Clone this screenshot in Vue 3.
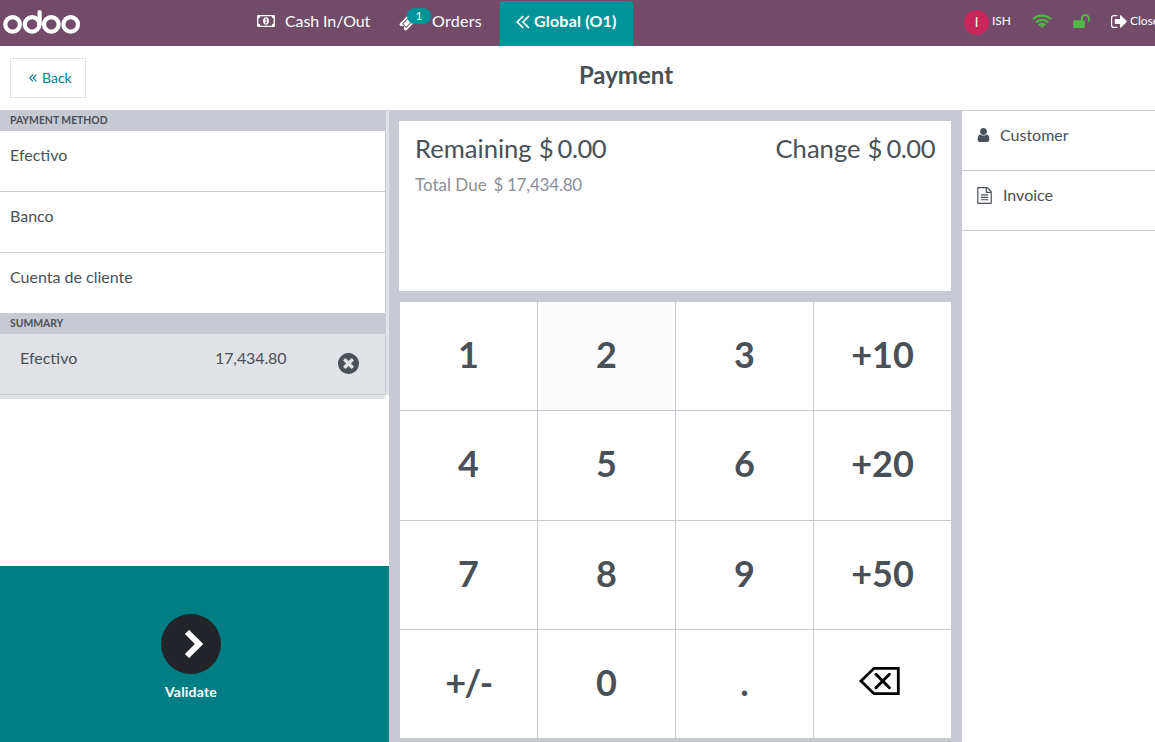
<script setup>
import { ref } from 'vue';

const methods = ref(['Efectivo', 'Banco', 'Cuenta de cliente']);
const lines = ref([{ name: 'Efectivo', amount: '17,434.80' }]);
const keys = ['1', '2', '3', '+10', '4', '5', '6', '+20', '7', '8', '9', '+50', '+/-', '0', '.', 'back'];
const activeKey = ref('2');

function removeLine(index){
    lines.value.splice(index, 1);
}
</script>

<template>
    <div class="pos">
        <header class="topbar">
            <svg class="logo" viewBox="0 0 78 26">
                <g fill="none" stroke="#fff" stroke-width="4.2">
                    <circle cx="9.6" cy="15.4" r="7.3" />
                    <circle cx="29.1" cy="15.4" r="7.3" />
                    <circle cx="48.3" cy="15.4" r="7.3" />
                    <circle cx="67.7" cy="15.4" r="7.3" />
                    <path d="M36.6 15.4V3.2" stroke-linecap="round" />
                </g>
            </svg>
            <div class="menu">
                <div class="menu-item cash">
                    <svg class="icon-money" viewBox="0 0 18 12">
                        <rect x="0.7" y="0.7" width="16.6" height="10.6" rx="0.6" fill="none" stroke="#fff" stroke-width="1.3" />
                        <path d="M1 1h2.400A2.400 2.400 0 0 1 1 3.400zM17 1h-2.400A2.400 2.400 0 0 0 17 3.400zM1 11h2.400A2.400 2.400 0 0 0 1 8.600zM17 11h-2.400A2.400 2.400 0 0 1 17 8.600z" fill="#fff" />
                        <ellipse cx="9" cy="6" rx="2.9" ry="3.7" fill="#fff" />
                        <path d="M8.1 4.6l1.1-.7v3.8M8 7.9h2.2" fill="none" stroke="#714b67" stroke-width="0.9" />
                    </svg>
                    <span>Cash In/Out</span>
                </div>
                <div class="menu-item orders">
                    <svg class="icon-ticket" viewBox="0 0 1792 1792">
                        <path fill="#fff" d="M1024 452l316 316-572 572-316-316zm-211 979l618-618q19-19 19-45t-19-45l-362-362q-18-18-45-18t-45 18l-618 618q-19 19-19 45t19 45l362 362q18 18 45 18t45-18zm889-637l-907 908q-37 37-90.500 37t-90.500-37l-126-126q56-56 56-136t-56-136-136-56-136 56l-125-126q-37-37-37-90.500t37-90.500l907-906q37-37 90.500-37t90.500 37l125 125q-56 56-56 136t56 136 136 56 136-56l126 125q37 37 37 90.500t-37 90.500z" />
                    </svg>
                    <span class="badge">1</span>
                    <span class="orders-label">Orders</span>
                </div>
                <div class="floor">
                    <svg class="icon-double" viewBox="0 0 14 14">
                        <path d="M7.200 1L1.200 7l6 6M13 1L7 7l6 6" fill="none" stroke="#fff" stroke-width="1.700" />
                    </svg>
                    <span>Global (O1)</span>
                </div>
            </div>
            <div class="status">
                <span class="avatar">I</span>
                <span class="user">ISH</span>
                <svg class="icon-wifi" viewBox="0 0 20 14">
                    <g fill="none" stroke="#4fb946" stroke-width="2.300">
                        <path d="M1 5.200a13 13 0 0 1 18 0" />
                        <path d="M4 8.300a8.700 8.700 0 0 1 12 0" />
                        <path d="M6.900 11.200a4.500 4.500 0 0 1 6.200 0" />
                    </g>
                    <path d="M10 14l-2-2.100a3 3 0 0 1 4 0z" fill="#4fb946" />
                </svg>
                <svg class="icon-lock" viewBox="64 128 1664 1408">
                    <path fill="#4fb946" d="M1728 576v256q0 26-19 45t-45 19h-64q-26 0-45-19t-19-45v-256q0-106-75-181t-181-75-181 75-75 181v192h96q40 0 68 28t28 68v576q0 40-28 68t-68 28h-960q-40 0-68-28t-28-68v-576q0-40 28-68t68-28h672v-192q0-185 131.500-316.500t316.500-131.500 316.500 131.500 131.500 316.500z" />
                </svg>
                <svg class="icon-out" viewBox="96 256 1536 1280">
                    <path fill="#fff" d="M704 1440q0 4 1 20t.5 26.500-3 23.500-10 19.500-20.500 6.500h-320q-119 0-203.500-84.500t-84.500-203.500v-704q0-119 84.500-203.500t203.500-84.500h320q13 0 22.500 9.500t9.500 22.500q0 4 1 20t.5 26.500-3 23.500-10 19.500-20.500 6.500h-320q-66 0-113 47t-47 113v704q0 66 47 113t113 47h312l11.500 1 11.500 3 8 5.500 7 9 2 13.500zm928-544q0 26-19 45l-544 544q-19 19-45 19t-45-19-19-45v-288h-448q-26 0-45-19t-19-45v-384q0-26 19-45t45-19h448v-288q0-26 19-45t45-19 45 19l544 544q19 19 19 45z" />
                </svg>
                <span class="close">Close</span>
            </div>
        </header>

        <div class="title-bar">
            <button class="back">
                <svg class="icon-back" viewBox="0 0 14 14">
                    <path d="M7 1L1.200 7 7 13M13 1L7.200 7l5.800 6" fill="none" stroke="#017e84" stroke-width="2" />
                </svg>
                <span>Back</span>
            </button>
            <h1>Payment</h1>
        </div>

        <main class="content">
            <section class="left">
                <div class="lists">
                    <div class="lists-inner">
                        <div class="section-title">PAYMENT METHOD</div>
                        <div v-for="m in methods" :key="m" class="method">{{ m }}</div>
                        <div class="section-title">SUMMARY</div>
                        <div v-for="(line, i) in lines" :key="i" class="line">
                            <span class="line-name">{{ line.name }}</span>
                            <span class="line-amount">{{ line.amount }}</span>
                            <svg class="icon-remove" viewBox="128 128 1536 1536" @click="removeLine(i)">
                                <path fill="#495057" d="M1277 1122q0-26-19-45l-181-181 181-181q19-19 19-45 0-27-19-46l-90-90q-19-19-46-19-26 0-45 19l-181 181-181-181q-19-19-45-19-27 0-46 19l-90 90q-19 19-19 46 0 26 19 45l181 181-181 181q-19 19-19 45 0 27 19 46l90 90q19 19 46 19 26 0 45-19l181-181 181 181q19 19 45 19 27 0 46-19l90-90q19-19 19-46zm387-226q0 209-103 385.500t-279.500 279.500-385.500 103-385.500-103-279.500-279.500-103-385.500 103-385.500 279.500-279.500 385.500-103 385.500 103 279.500 279.500 103 385.500z" />
                            </svg>
                        </div>
                    </div>
                </div>
                <div class="lists-foot"></div>
                <div class="validate">
                    <span class="validate-circle">
                        <svg class="icon-next" viewBox="0 0 20 30">
                            <path d="M3 3L15 15 3 27" fill="none" stroke="#fff" stroke-width="6" />
                        </svg>
                    </span>
                    <span class="validate-label">Validate</span>
                </div>
            </section>

            <section class="center">
                <div class="display">
                    <div class="amounts">
                        <div><span class="label">Remaining</span><span class="value">$ 0.00</span></div>
                        <div><span class="label">Change</span><span class="value">$ 0.00</span></div>
                    </div>
                    <div class="total"><span class="total-label">Total Due</span><span class="total-value">$ 17,434.80</span></div>
                </div>
                <div class="numpad">
                    <button
                        v-for="k in keys"
                        :key="k"
                        class="key"
                        :class="{ 'key--active': k === activeKey, 'key--sign': k === '+/-' }"
                    >
                        <svg v-if="k === 'back'" class="icon-backspace" viewBox="0 0 42 30">
                            <path d="M2 15L15 2.300h24.300v25.400H15z" fill="none" stroke="#000" stroke-width="2.800" />
                            <path d="M17 8.300l13.400 13.400M30.400 8.300L17 21.700" fill="none" stroke="#000" stroke-width="3" stroke-linecap="round" />
                        </svg>
                        <span v-else>{{ k }}</span>
                    </button>
                </div>
            </section>

            <section class="right">
                <div class="option">
                    <svg class="icon-user" viewBox="256 128 1280 1536">
                        <path fill="#495057" d="M1536 1399q0 109-62.500 187t-150.500 78h-854q-88 0-150.500-78t-62.500-187q0-85 8.500-160.500t31.500-152 58.500-131 94-89 134.500-34.500q131 128 313 128t313-128q76 0 134.500 34.500t94 89 58.500 131 31.500 152 8.500 160.500zm-256-887q0 159-112.500 271.500t-271.500 112.500-271.500-112.500-112.500-271.500 112.500-271.500 271.500-112.500 271.500 112.500 112.500 271.500z" />
                    </svg>
                    <span>Customer</span>
                </div>
                <div class="option">
                    <svg class="icon-file" viewBox="128 0 1536 1792">
                        <path fill="#495057" d="M1596 380q28 28 48 76t20 88v1152q0 40-28 68t-68 28h-1344q-40 0-68-28t-28-68v-1600q0-40 28-68t68-28h896q40 0 88 20t76 48zm-444-244v376h376q-10-29-22-41l-313-313q-12-12-41-22zm384 1528v-1024h-416q-40 0-68-28t-28-68v-416h-768v1536h1280zm-1024-864q0-14 9-23t23-9h704q14 0 23 9t9 23v64q0 14-9 23t-23 9h-704q-14 0-23-9t-9-23v-64zm736 224q14 0 23 9t9 23v64q0 14-9 23t-23 9h-704q-14 0-23-9t-9-23v-64q0-14 9-23t23-9h704zm0 256q14 0 23 9t9 23v64q0 14-9 23t-23 9h-704q-14 0-23-9t-9-23v-64q0-14 9-23t23-9h704z" />
                    </svg>
                    <span>Invoice</span>
                </div>
            </section>
        </main>
    </div>
</template>

<style>
body{
    margin: 0;
    overflow: hidden;
}
</style>

<style scoped>
.pos{
    display: flex;
    flex-direction: column;
    height: 100vh;
    overflow: hidden;
    background: #fff;
    color: #495057;
    font-family: Lato, sans-serif;
    font-size: 16px;
}

.pos *{
    box-sizing: border-box;
}

svg{
    display: block;
    flex: none;
}

button{
    font-family: inherit;
    color: inherit;
    padding: 0;
    margin: 0;
    border: none;
    background: #fff;
}

/* top bar */
.topbar{
    display: flex;
    flex: none;
    height: 46px;
    background: #714b67;
    color: #fff;
    white-space: nowrap;
    overflow: hidden;
}

.logo{
    width: 78px;
    height: 26px;
    margin: 9px 0 0 3px;
}

.menu{
    display: flex;
    flex: none;
    width: 552px;
    margin-left: 176px;
    line-height: 42px;
}

.menu-item{
    display: flex;
}

.cash{
    width: 142px;
    letter-spacing: -0.1px;
}

.icon-money{
    width: 18px;
    height: 12px;
    margin: 15px 10px 0 0;
}

.orders{
    position: relative;
    width: 101px;
}

.orders-label{
    letter-spacing: 0.3px;
}

.icon-ticket{
    width: 17px;
    height: 17px;
    margin: 14px 16px 0 0;
}

.badge{
    position: absolute;
    left: 8px;
    top: 8px;
    width: 24px;
    height: 16px;
    border-radius: 8px;
    background: #00939a;
    font-size: 12px;
    line-height: 15px;
    text-align: center;
}

.floor{
    display: flex;
    width: 133px;
    height: 45px;
    margin-top: 1px;
    padding-left: 16px;
    border-radius: 3px 3px 0 0;
    background: #00939a;
    font-weight: bold;
    letter-spacing: 0.2px;
    line-height: 40px;
}

.icon-double{
    width: 14px;
    height: 14px;
    margin: 14px 4px 0 0;
}

.status{
    display: flex;
    flex: none;
    margin-left: 155px;
    font-size: 12px;
    line-height: 42px;
}

.avatar{
    width: 25px;
    height: 25px;
    margin: 10px 3px 0 0;
    border-radius: 50%;
    background: #c9265c;
    font-size: 13px;
    line-height: 24px;
    text-align: center;
}

.user{
    width: 40px;
}

.icon-wifi{
    width: 20px;
    height: 14px;
    margin-top: 14px;
}

.icon-lock{
    width: 17px;
    height: 14px;
    margin: 14px 0 0 21px;
}

.icon-out{
    width: 16px;
    height: 13px;
    margin: 15px 3px 0 21px;
}

/* title */
.title-bar{
    display: flex;
    flex: none;
    height: 64px;
}

.back{
    display: flex;
    align-items: center;
    width: 76px;
    height: 40px;
    margin: 12px 0 0 10px;
    padding: 0 0 2px 18px;
    border: 1px solid #e0e2e6;
    color: #017e84;
    font-size: 14px;
}

.icon-back{
    width: 8px;
    height: 8px;
    margin: 2px 5px 0 0;
}

h1{
    width: 300px;
    margin: 0 0 0 390px;
    font-size: 24px;
    line-height: 58px;
    text-align: center;
}

/* columns */
.content{
    display: flex;
    flex: 1;
    min-height: 0;
}

.left{
    display: flex;
    flex-direction: column;
    width: 389px;
    border-top: 1px solid #c8cad3;
}

.lists{
    padding-right: 3px;
    background: #e1e2e5;
}

.lists-inner{
    border-right: 1px solid #c8cad3;
    background: #fff;
}

.section-title{
    height: 20px;
    padding-left: 10px;
    background: #c8cad3;
    font-size: 10.4px;
    font-weight: bold;
    line-height: 19px;
}

.method{
    height: 61px;
    padding-left: 10px;
    border-bottom: 1px solid #c8cad3;
    line-height: 48px;
}

.line{
    display: flex;
    height: 61px;
    padding-left: 20px;
    border-bottom: 1px solid #c8cad3;
    background: #e1e2e5;
    line-height: 48px;
}

.line-name{
    width: 195px;
}

.line-amount{
    width: 123px;
    letter-spacing: -0.1px;
}

.icon-remove{
    width: 21px;
    height: 21px;
    margin-top: 19px;
}

.lists-foot{
    width: 385px;
    height: 4px;
    background: #e1e2e5;
}

.validate{
    display: flex;
    flex-direction: column;
    align-items: center;
    height: 176px;
    margin-top: auto;
    padding: 48px 7px 0 0;
    background: #017e84;
    color: #fff;
}

.validate-circle{
    display: flex;
    align-items: center;
    justify-content: center;
    width: 60px;
    height: 60px;
    border-radius: 50%;
    background: #212529;
}

.icon-next{
    width: 20px;
    height: 30px;
    margin-left: 5px;
}

.validate-label{
    font-size: 14px;
    font-weight: bold;
    letter-spacing: 0.2px;
    line-height: 36px;
}

.center{
    display: flex;
    flex-direction: column;
    width: 573px;
    padding: 11px 11px 4px 10px;
    background: #c8cad3;
}

.display{
    flex: none;
    height: 170px;
    padding: 7px 16px;
    background: #fff;
}

.amounts{
    display: flex;
    justify-content: space-between;
    font-size: 25.6px;
    line-height: 40px;
}

.label{
    margin-right: 7px;
}

.value{
    letter-spacing: -0.5px;
    word-spacing: -1.5px;
}

.total{
    color: #8b8f99;
    font-size: 17px;
    line-height: 34px;
}

.total-label{
    margin-right: 7px;
}

.total-value{
    letter-spacing: -0.2px;
    word-spacing: -0.5px;
}

.numpad{
    display: grid;
    flex: 1;
    grid-template-columns: repeat(4, 1fr);
    grid-template-rows: repeat(4, 1fr);
    gap: 1px;
    margin: 11px 0 0 1px;
}

.key{
    display: flex;
    align-items: center;
    justify-content: center;
    padding-bottom: 4px;
    font-size: 36px;
    font-weight: bold;
}

.key--active{
    background: #fcfcfc;
}

.key--sign{
    letter-spacing: -1.5px;
}

.icon-backspace{
    width: 42px;
    height: 30px;
    margin: -1px 5px 0 0;
}

.right{
    flex: 1;
    border-top: 1px solid #c8cad3;
}

.option{
    display: flex;
    height: 60px;
    padding-left: 15px;
    border-bottom: 1px solid #c8cad3;
    line-height: 48px;
}

.icon-user{
    width: 13px;
    height: 14px;
    margin: 17px 10px 0 0;
}

.icon-file{
    width: 15px;
    height: 17px;
    margin: 16px 11px 0 0;
}
</style>
